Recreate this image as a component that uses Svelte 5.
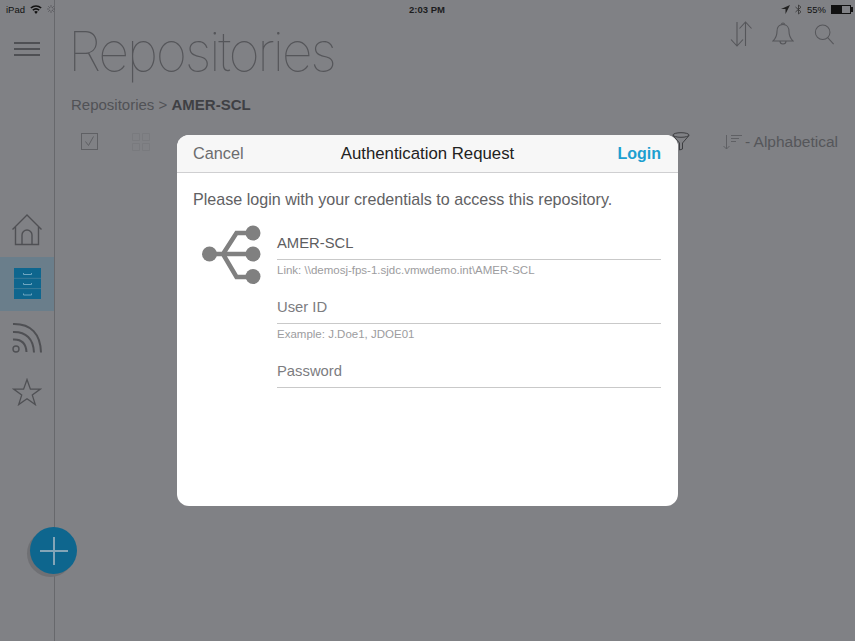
<script>
	const iconStroke = '#4f5054';
</script>

<div class="screen">
	<aside class="sidebar">
		<button class="menu" aria-label="Menu">
			<span></span><span></span><span></span>
		</button>
		<nav class="nav">
			<a href="#home" class="nav-item" aria-label="Home">
				<svg width="32" height="33" viewBox="0 0 32 33" fill="none" stroke={iconStroke} stroke-width="1.4">
					<path d="M1.5 16.500 16 2l14.500 14.500M4.500 14v17.500h23V14" />
					<path d="M11 31.500V22a5 5 0 0 1 10 0v9.500" />
				</svg>
			</a>
			<a href="#repos" class="nav-item active" aria-label="Repositories">
				<svg width="27" height="31" viewBox="0 0 27 31">
					<rect width="27" height="31" fill="#0e668e" />
					<path d="M0 10.300h27M0 20.600h27" stroke="#47809b" stroke-width="0.800" />
					<path d="M9.500 5v1.500h8V5M9.500 15v1.500h8V15M9.500 25.500V27h8v-1.500" fill="none" stroke="#6fa6c0" />
				</svg>
			</a>
			<a href="#feeds" class="nav-item" aria-label="Feeds">
				<svg width="32" height="33" viewBox="0 0 32 33" fill="none" stroke={iconStroke}>
					<circle cx="5" cy="28" r="3" stroke-width="1.400" />
					<path d="M2 18.500C11 18 15 23 15.500 31M2 11c13-.500 20.500 7 21 20.500M2 3c18-.500 27.500 10 28 28.500" stroke-width="2" />
				</svg>
			</a>
			<a href="#favs" class="nav-item" aria-label="Favorites">
				<svg width="30" height="28" viewBox="0 0 30 28" fill="none" stroke={iconStroke} stroke-width="1.300">
					<path d="M15 1.500l3.400 9.600h10l-8.100 6 3 9.500-8.300-5.800-8.300 5.800 3-9.500-8.100-6h10z" />
				</svg>
			</a>
		</nav>
	</aside>

	<main class="main">
		<header class="statusbar">
			<div class="status-left">
				<span>iPad</span>
				<svg width="12" height="9" viewBox="0 0 12 9">
					<path d="M6 9 4.200 6.800a2.800 2.800 0 0 1 3.600 0zM3.300 5.800 2.300 4.600a5.800 5.800 0 0 1 7.400 0l-1 1.200a4.200 4.200 0 0 0-5.400 0zM1.400 3.600.3 2.400a8.800 8.800 0 0 1 11.400 0l-1.100 1.200a7.200 7.200 0 0 0-9.200 0z" fill="#111" />
				</svg>
				<svg width="8" height="8" viewBox="0 0 8 8" stroke="#55565a" stroke-width="0.800">
					<path d="M4 0v2.500M4 5.500V8M0 4h2.500M5.500 4H8M1.200 1.200 3 3M5 5l1.800 1.800M6.800 1.200 5 3M3 5 1.200 6.800" />
				</svg>
			</div>
			<span class="clock">2:03 PM</span>
			<div class="status-right">
				<svg width="9" height="9" viewBox="0 0 9 9"><path d="M9 0 0 4h4.500V9z" fill="#222" /></svg>
				<svg width="7" height="11" viewBox="0 0 7 11" fill="none" stroke="#333" stroke-width="0.800"><path d="M.5 3 6 7.800 3.500 10V1L6 3.200.5 8" /></svg>
				<span>55%</span>
				<div class="battery"><div class="level" style="width: 55%"></div></div>
			</div>
		</header>

		<div class="title-row">
			<h1>Repositories</h1>
			<div class="top-icons">
				<svg width="22" height="26" viewBox="0 0 22 26" fill="none" stroke="#55565a" stroke-width="1.100">
					<path d="M7 1v24M1 18.500 7 25l6-6.500M15.500 25V1M9.500 7.500l6-6.500 6 6.500" />
				</svg>
				<svg width="22" height="26" viewBox="0 0 22 26" fill="none" stroke="#55565a" stroke-width="1.100">
					<path d="M11 3.500c-4 0-6 3-6 7 0 5-1.500 7-4 9.500h20c-2.500-2.500-4-4.500-4-9.500 0-4-2-7-6-7z" />
					<path d="M9.500 3.500a1.500 1.500 0 0 1 3 0M8 20a3 3 0 0 0 6 0" />
				</svg>
				<svg width="21" height="21" viewBox="0 0 22 23" fill="none" stroke="#55565a" stroke-width="1.100">
					<circle cx="9" cy="9" r="8" />
					<path d="m14.500 15 6.500 7" />
				</svg>
			</div>
		</div>

		<p class="crumbs">Repositories &gt; <b>AMER-SCL</b></p>

		<div class="toolbar">
			<div class="tools-left">
				<svg width="17" height="17" viewBox="0 0 17 17" fill="none" stroke="#5f6064">
					<rect x="0.500" y="0.500" width="16" height="16" />
					<path d="m4.500 8.500 3 4 5-9" />
				</svg>
				<svg width="18" height="18" viewBox="0 0 18 18" fill="none" stroke="#77787c" stroke-width="0.800">
					<path d="M.5.500h7v7h-7zM10.500 .5h7v7h-7zM.5 10.500h7v7h-7zM10.500 10.500h7v7h-7z" />
				</svg>
			</div>
			<div class="tools-right">
				<svg width="18" height="19" viewBox="0 0 18 19" fill="none" stroke="#3c3d40">
					<ellipse cx="9" cy="3" rx="8" ry="2.300" />
					<path d="M1 3.500 7.500 11v7l3-1v-6L17 3.500" />
				</svg>
				<div class="sort">
					<svg width="20" height="16" viewBox="0 0 20 16" fill="none" stroke="#5f6064">
						<path d="M3.500 1v14M.5 12l3 3 3-3" />
						<path d="M8 1.500h11M8 4.500h8M8 7.500h5" />
					</svg>
					<span>- Alphabetical</span>
				</div>
			</div>
		</div>
	</main>

	<button class="fab" aria-label="Add">
		<svg width="28" height="28" viewBox="0 0 28 28" stroke="#84a5b7" stroke-width="2">
			<path d="M14 0v28M0 14h28" />
		</svg>
	</button>

	<div class="modal">
		<div class="modal-head">
			<span class="cancel">Cancel</span>
			<span class="modal-title">Authentication Request</span>
			<span class="login">Login</span>
		</div>
		<div class="modal-body">
			<p class="intro">Please login with your credentials to access this repository.</p>
			<div class="form">
				<svg class="share" width="60" height="60" viewBox="0 0 60 60" fill="none" stroke="#808080">
					<path d="M8 30h44M22 30 35.500 9H52M22 30l13.500 23H52" stroke-width="4.500" />
					<circle cx="8.500" cy="30" r="7.500" fill="#808080" stroke="none" />
					<circle cx="52" cy="9" r="7.500" fill="#808080" stroke="none" />
					<circle cx="52" cy="30" r="7.500" fill="#808080" stroke="none" />
					<circle cx="52" cy="52.500" r="7.500" fill="#808080" stroke="none" />
				</svg>
				<div class="fields">
					<div class="field">
						<div class="value">AMER-SCL</div>
						<div class="hint">Link: \\demosj-fps-1.sjdc.vmwdemo.int\AMER-SCL</div>
					</div>
					<div class="field">
						<div class="value placeholder">User ID</div>
						<div class="hint">Example: J.Doe1, JDOE01</div>
					</div>
					<div class="field">
						<div class="value placeholder">Password</div>
					</div>
				</div>
			</div>
		</div>
	</div>
</div>

<style>
	:global(body) {
		margin: 0;
		background: #808185;
	}

	.screen {
		position: relative;
		width: 855px;
		height: 641px;
		overflow: hidden;
		display: flex;
		background: #808185;
		font-family: "Liberation Sans", Arial, sans-serif;
	}

	.sidebar {
		flex: 0 0 54px;
		border-right: 1px solid #67686c;
		display: flex;
		flex-direction: column;
		align-items: stretch;
	}

	.menu {
		display: flex;
		flex-direction: column;
		gap: 4.500px;
		align-self: center;
		margin-top: 42px;
		padding: 0;
		border: none;
		background: none;
	}

	.menu span {
		display: block;
		width: 26px;
		height: 1.500px;
		background: #4f5054;
	}

	.nav {
		margin-top: 147px;
		display: flex;
		flex-direction: column;
	}

	.nav-item {
		height: 54px;
		display: flex;
		align-items: center;
		justify-content: center;
	}

	.active {
		background: #6a7e8b;
	}

	.main {
		flex: 1;
		min-width: 0;
		display: flex;
		flex-direction: column;
	}

	.statusbar {
		position: relative;
		height: 18px;
		margin-left: -54px;
		padding: 0 4px 0 5px;
		display: flex;
		justify-content: space-between;
		align-items: center;
		font-size: 9.500px;
		color: #111;
	}

	.status-left, .status-right {
		display: flex;
		align-items: center;
		gap: 5px;
	}

	.clock {
		position: absolute;
		left: 408px;
		font-weight: bold;
		color: #1c1c1e;
	}

	.battery {
		width: 18px;
		height: 7px;
		border: 1px solid #111;
		position: relative;
	}

	.battery::after {
		content: '';
		position: absolute;
		right: -3px;
		top: 1px;
		width: 2px;
		height: 5px;
		background: #111;
	}

	.level {
		height: 100%;
		background: #111;
	}

	.title-row {
		display: flex;
		justify-content: space-between;
		align-items: flex-start;
		padding: 0 20px 0 13px;
	}

	h1 {
		margin: 0;
		font-family: Inter, sans-serif;
		font-weight: 100;
		font-size: 54px;
		line-height: 68px;
		letter-spacing: -2.400px;
		color: #55565a;
	}

	.top-icons {
		display: flex;
		align-items: center;
		gap: 20px;
		height: 32px;
	}

	.crumbs {
		margin: 10px 0 0 16px;
		font-size: 15px;
		line-height: 18px;
		color: #515256;
	}

	.crumbs b {
		color: #3f4044;
	}

	.toolbar {
		display: flex;
		justify-content: space-between;
		align-items: center;
		margin-top: 18px;
		padding: 0 17px 0 26px;
	}

	.tools-left {
		display: flex;
		align-items: center;
		gap: 34px;
	}

	.tools-right {
		display: flex;
		align-items: center;
		gap: 33px;
	}

	.sort {
		display: flex;
		align-items: center;
		gap: 2px;
		font-size: 15.500px;
		color: #55565a;
	}

	.fab {
		position: absolute;
		left: 30px;
		top: 527px;
		width: 47px;
		height: 47px;
		padding: 0;
		border: none;
		border-radius: 50%;
		background: #0e668e;
		display: flex;
		align-items: center;
		justify-content: center;
		box-shadow: -3px 3px 0 #6f7074;
	}

	.modal {
		position: absolute;
		left: 177px;
		top: 135px;
		width: 501px;
		height: 371px;
		border-radius: 12px;
		background: #fff;
		overflow: hidden;
	}

	.modal-head {
		position: relative;
		height: 37px;
		border-bottom: 1px solid #cfcfd1;
		background: #f7f7f7;
		display: flex;
		justify-content: space-between;
		align-items: center;
		padding: 0 17px 0 16px;
	}

	.cancel {
		font-size: 16.300px;
		color: #6c6c6e;
	}

	.modal-title {
		position: absolute;
		left: 0;
		right: 0;
		text-align: center;
		font-size: 16.800px;
		color: #222;
		pointer-events: none;
	}

	.login {
		font-size: 16px;
		font-weight: bold;
		color: #1c9fd0;
	}

	.modal-body {
		padding: 17px 17px 0 16px;
	}

	.intro {
		margin: 0;
		font-size: 16.100px;
		line-height: 19px;
		color: #616163;
	}

	.form {
		display: flex;
		align-items: flex-start;
		margin-top: 8px;
	}

	.share {
		flex: none;
		margin: 7px 0 0 8px;
	}

	.fields {
		flex: 1;
		margin-left: 16px;
		padding-top: 11px;
	}

	.field {
		height: 64px;
	}

	.value {
		height: 32px;
		padding-top: 7px;
		box-sizing: border-box;
		border-bottom: 1px solid #c9c9c9;
		font-size: 14.800px;
		line-height: 17px;
		color: #5d5d5f;
	}

	.placeholder {
		color: #7c7c7f;
	}

	.hint {
		margin-top: 4px;
		font-size: 11.500px;
		line-height: 13px;
		color: #9c9c9e;
	}
</style>
